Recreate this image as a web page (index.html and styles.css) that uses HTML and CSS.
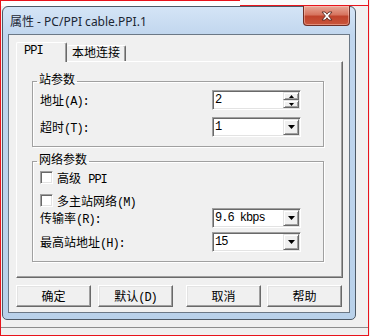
FILE: index.html
```html
<!DOCTYPE html>
<html>
<head>
  <title>属性 - PC/PPI cable.PPI.1</title>
  <link rel="stylesheet" href="styles.css">
</head>
<body>
  <div class="screen">
    <!-- strip of the window behind the dialog -->
    <div class="behind">
      <div class="btabs">
        <span class="bcell c1">叫路径</span>
        <span class="bcell c2">TCP / UCP</span>
        <span class="bcell c3">PNIO 诸配表</span>
        <span class="bcell c4">Info</span>
      </div>
      <div class="brest"></div>
    </div>

    <div class="window">
      <div class="titlebar">
        <span class="title">属性 - PC/PPI cable.PPI.1</span>
      </div>
      <div class="close">
        <svg width="12" height="10" viewBox="0 0 12 10">
          <path d="M1,1 H4.2 L6,3.2 L7.8,1 H11 L7.6,5 L11,9 H7.8 L6,6.8 L4.2,9 H1 L4.4,5 Z" fill="#fff" stroke="#5a2a22" stroke-width="0.9"/>
        </svg>
      </div>

      <div class="client">
        <div class="tabs">
          <div class="tab active"><span class="lat">PPI</span></div>
          <div class="tab">本地连接</div>
        </div>

        <div class="panel">
          <fieldset class="group g1">
            <legend>站参数</legend>
            <div class="row">
              <span class="label">地址<span class="lat">(A):</span></span>
              <div class="combo">
                <span class="value">2</span>
                <div class="spin">
                  <span class="sbtn"><svg width="5" height="3" viewBox="0 0 5 3"><polygon points="2.5,0 5,3 0,3" fill="#000"/></svg></span>
                  <span class="sbtn"><svg width="5" height="3" viewBox="0 0 5 3"><polygon points="0,0 5,0 2.5,3" fill="#000"/></svg></span>
                </div>
              </div>
            </div>
            <div class="row r2">
              <span class="label">超时<span class="lat">(T):</span></span>
              <div class="combo">
                <span class="value">1</span>
                <span class="drop"><svg width="7" height="4" viewBox="0 0 7 4"><polygon points="0,0 7,0 3.5,4" fill="#000"/></svg></span>
              </div>
            </div>
          </fieldset>

          <fieldset class="group g2">
            <legend>网络参数</legend>
            <div class="check">
              <span class="box"></span>
              <span>高级 <span class="lat">PPI</span></span>
            </div>
            <div class="check c2">
              <span class="box"></span>
              <span>多主站网络<span class="lat">(M)</span></span>
            </div>
            <div class="row r3">
              <span class="label">传输率<span class="lat">(R):</span></span>
              <div class="combo">
                <span class="value">9.6 kbps</span>
                <span class="drop"><svg width="7" height="4" viewBox="0 0 7 4"><polygon points="0,0 7,0 3.5,4" fill="#000"/></svg></span>
              </div>
            </div>
            <div class="row r4">
              <span class="label">最高站地址<span class="lat">(H):</span></span>
              <div class="combo">
                <span class="value">15</span>
                <span class="drop"><svg width="7" height="4" viewBox="0 0 7 4"><polygon points="0,0 7,0 3.5,4" fill="#000"/></svg></span>
              </div>
            </div>
          </fieldset>
        </div>

        <div class="buttons">
          <button class="btn">确定</button>
          <button class="btn">默认<span class="lat">(D)</span></button>
          <button class="btn cancel">取消</button>
          <button class="btn">帮助</button>
        </div>
      </div>
    </div>

    <div class="deskline"></div>
  </div>
</body>
</html>
```

FILE: styles.css
```css
html, body {
  margin: 0;
  padding: 0;
}

body {
  width: 370px;
  height: 336px;
  overflow: hidden;
  background: #f0f0f0;
  font-family: "Liberation Mono", "Noto Sans CJK SC", monospace;
  font-size: 12px;
  color: #000;
}

/* latin parts are narrower in the original bitmap font */
.lat {
  letter-spacing: -1px;
}

.screen {
  width: 369px;
  height: 336px;
  box-sizing: border-box;
  border-left: 1px solid #e8141c;
  border-right: 1px solid #e8141c;
  border-bottom: 1px solid #e8141c;
}

/* window behind */
.behind {
  display: flex;
  height: 6px;
}

.btabs {
  display: flex;
  width: 239px;
  height: 5px;
  border-top: 1px solid #e8141c;
  overflow: hidden;
  background: #fff;
}

.bcell {
  display: block;
  height: 5px;
  line-height: 12px;
  margin-top: -7px;
  padding: 0 3px;
  border-left: 1px solid #222;
  border-right: 1px solid #222;
  white-space: nowrap;
  overflow: hidden;
  box-sizing: border-box;
}

.bcell.c1 { width: 44px; border-left: none; }
.bcell.c2 { width: 66px; margin-left: 4px; }
.bcell.c3 { width: 78px; }
.bcell.c4 { width: 41px; margin-left: 6px; }

.brest {
  flex: 1;
  height: 5px;
  background: #fafafa;
  border-bottom: 1px solid #e8141c;
}

/* dialog frame */
.window {
  position: relative;
  margin-left: 1px;
  width: 354px;
  height: 314px;
  box-sizing: border-box;
  border: 1px solid #4d5966;
  border-radius: 6px 6px 5px 5px;
  background: linear-gradient(#d4e4f6 0, #c1d6ee 28px, #b9d1ea 100%);
  padding: 0 5px 6px;
  display: flex;
  flex-direction: column;
}

.titlebar {
  height: 27px;
  display: flex;
  align-items: center;
  padding-left: 2px;
}

.title {
  font-family: "Noto Sans", "Noto Sans CJK SC", sans-serif;
  font-size: 12px;
  color: #1b2633;
  white-space: nowrap;
}

.close {
  position: absolute;
  top: -1px;
  right: 5px;
  width: 47px;
  height: 20px;
  box-sizing: border-box;
  border: 1px solid #6e2e25;
  border-top: none;
  border-radius: 0 0 4px 4px;
  background: linear-gradient(#e9a898 0, #d77560 45%, #c0432c 55%, #c9553b 100%);
  box-shadow: inset 0 0 0 1px rgba(255, 210, 200, 0.45);
  display: flex;
  align-items: center;
  justify-content: center;
}

.client {
  height: 279px;
  box-sizing: border-box;
  border: 1px solid #6b7886;
  background: #f0f0f0;
  padding: 7px 6px 0 7px;
}

/* tabs */
.tabs {
  display: flex;
  align-items: flex-end;
  height: 19px;
}

.tab {
  height: 16px;
  box-sizing: border-box;
  padding: 0 5px;
  line-height: 16px;
  border-top: 1px solid #fff;
  border-right: 1px solid #696969;
  box-shadow: inset -1px 0 0 #a0a0a0;
  border-radius: 2px 2px 0 0;
  white-space: nowrap;
}

.tab.active {
  position: relative;
  z-index: 1;
  width: 51px;
  height: 20px;
  margin-bottom: -1px;
  padding-left: 7px;
  line-height: 17px;
  border-left: 1px solid #fff;
  background: #f0f0f0;
}

/* panel */
.panel {
  width: 327px;
  height: 217px;
  box-sizing: border-box;
  border-top: 1px solid #fff;
  border-left: 1px solid #fff;
  border-right: 1px solid #696969;
  border-bottom: 1px solid #696969;
  box-shadow: inset -1px -1px 0 #a0a0a0;
  padding-left: 15px;
}

.group {
  width: 292px;
  box-sizing: border-box;
  margin: 0;
  padding: 1px 7px 9px 7px;
  border: 1px solid #a0a0a0;
  box-shadow: inset 1px 1px 0 #fff, 1px 1px 0 #fff;
  min-width: 0;
}

.group legend {
  margin-left: -3px;
  padding: 0 2px;
  line-height: 16px;
}

.g1 {
  margin-top: 11px;
}

.g2 {
  margin-top: 6px;
}

.row {
  display: flex;
  align-items: center;
  height: 20px;
}

.row.r2 { margin-top: 7px; }
.row.r3 { margin-top: 1px; }
.row.r4 { margin-top: 4px; }

.label {
  width: 172px;
  white-space: nowrap;
}

.combo {
  width: 89px;
  height: 20px;
  box-sizing: border-box;
  padding: 1px;
  border: 1px solid;
  border-color: #a0a0a0 #fff #fff #a0a0a0;
  box-shadow: inset 1px 1px 0 #696969, inset -1px -1px 0 #e3e3e3;
  background: #fff;
  display: flex;
}

.value {
  flex: 1;
  padding-left: 1px;
  line-height: 16px;
  letter-spacing: -1px;
}

.drop, .sbtn {
  box-sizing: border-box;
  border: 1px solid;
  border-color: #e3e3e3 #696969 #696969 #e3e3e3;
  box-shadow: inset 1px 1px 0 #fff, inset -1px -1px 0 #a0a0a0;
  background: #f0f0f0;
  display: flex;
  align-items: center;
  justify-content: center;
}

.drop {
  width: 16px;
  height: 16px;
}

.spin {
  width: 16px;
  display: flex;
  flex-direction: column;
}

.sbtn {
  height: 8px;
}

/* checkboxes */
.check {
  display: flex;
  align-items: center;
  gap: 4px;
  height: 13px;
  margin-top: 1px;
  white-space: nowrap;
}

.check.c2 {
  margin-top: 10px;
}

.box {
  width: 13px;
  height: 13px;
  box-sizing: border-box;
  border: 1px solid;
  border-color: #a0a0a0 #fff #fff #a0a0a0;
  box-shadow: inset 1px 1px 0 #696969, inset -1px -1px 0 #e3e3e3;
  background: #fff;
}

/* bottom buttons */
.buttons {
  display: flex;
  margin-top: 7px;
}

.btn {
  width: 75px;
  height: 22px;
  box-sizing: border-box;
  padding: 0;
  margin: 0;
  border: 1px solid;
  border-color: #fff #696969 #696969 #fff;
  box-shadow: inset -1px -1px 0 #a0a0a0, inset 1px 1px 0 #e3e3e3;
  background: #f0f0f0;
  font-family: inherit;
  font-size: 12px;
  color: #000;
}

.btn + .btn {
  margin-left: 7px;
}

.btn.cancel {
  margin-left: 13px;
}

.btn.cancel + .btn {
  margin-left: 6px;
}

.deskline {
  margin-top: 7px;
  height: 1px;
  background: #8c8c8c;
}
```
